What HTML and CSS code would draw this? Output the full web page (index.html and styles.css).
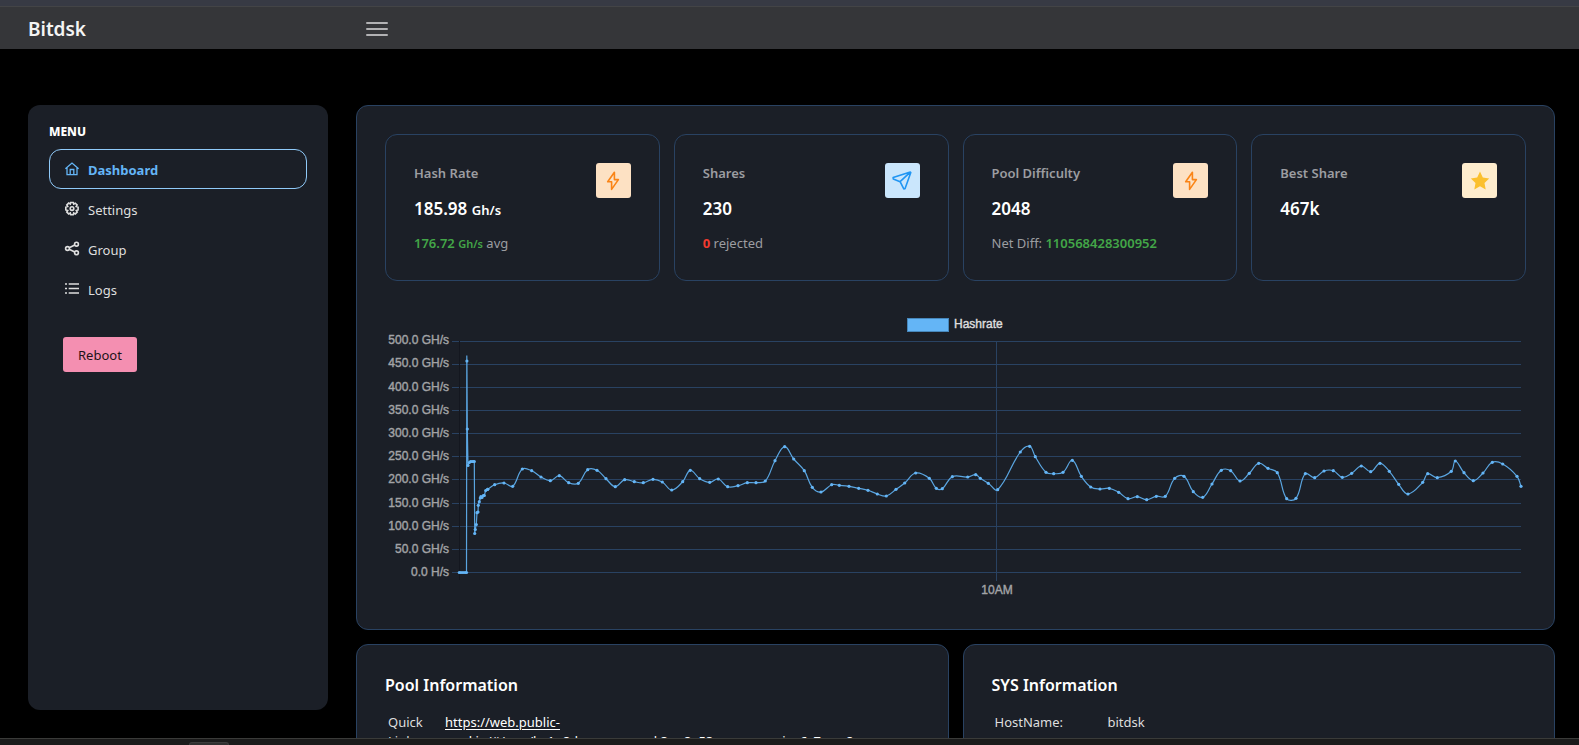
FILE: index.html
```html
<!DOCTYPE html>
<html lang="en">
<head>
<meta charset="utf-8">
<title>Bitdsk</title>
<link rel="stylesheet" href="styles.css">
</head>
<body>
<div class="window-strip"></div>
<header class="topbar">
  <h1 class="brand">Bitdsk</h1>
  <button class="menu-toggle" type="button" aria-label="Toggle menu"><span></span><span></span><span></span></button>
</header>
<div class="layout">
  <nav class="sidebar" aria-label="Menu">
    <h2 class="menu-title">MENU</h2>
    <ul class="menu">
      <li><a class="menu-link active" href="#dashboard">
        <svg class="icon" viewBox="0 0 14 14"><path d="M.4 5.8 7 0l6.6 5.8M2 4.6v7.1h10V4.6M5.2 11.7V6.5h3.6v5.2"/></svg>Dashboard</a></li>
      <li><a class="menu-link" href="#settings">
        <svg class="icon heavy" viewBox="0 1 14 14"><path d="M5.7.5h2.6l.4 1.6 1.5-.9 1.9 1.8-.9 1.5 1.9.6v2.8l-1.8.5.9 1.6-1.9 1.9-1.6-.9-.5 1.8H5.8l-.5-1.8-1.6.9-1.9-1.9.9-1.6L.8 7.9V5.1l1.9-.5L1.8 3l1.9-1.9 1.6.9z"/><circle cx="7" cy="6.6" r="1.8"/></svg>Settings</a></li>
      <li><a class="menu-link" href="#group">
        <svg class="icon heavy" viewBox="0 1 14 14"><circle cx="2.5" cy="6.5" r="1.9"/><circle cx="11.5" cy="2.2" r="1.9"/><circle cx="11.5" cy="10.8" r="1.9"/><path d="m4.2 5.7 5.6-2.7M4.2 7.3 9.8 10"/></svg>Group</a></li>
      <li><a class="menu-link" href="#logs">
        <svg class="icon heavy" viewBox="0 1 14 14"><path d="M0 2h2M3.7 2H14M0 6.5h2M3.7 6.5H14M0 11h2M3.7 11H14"/></svg>Logs</a></li>
    </ul>
    <button class="reboot" type="button">Reboot</button>
  </nav>
  <main class="content">
    <section class="card overview">
      <div class="stats">
        <article class="card stat">
          <div class="stat-head">
            <div><h3 class="stat-label">Hash Rate</h3><p class="stat-value">185.98 <small>Gh/s</small></p></div>
            <span class="badge orange"><svg viewBox="0 0 20 20"><path d="M11.4 1.2 4.7 10.8h3.9v7.6L15.4 8.6h-4z"/></svg></span>
          </div>
          <p class="stat-foot"><b class="good">176.72 <small>Gh/s</small></b> avg</p>
        </article>
        <article class="card stat">
          <div class="stat-head">
            <div><h3 class="stat-label">Shares</h3><p class="stat-value">230</p></div>
            <span class="badge blue"><svg viewBox="0 0 20 20"><path d="M18.3 1 1.1 6.6l.2 1.3 6.8 2.8 3.7 7.2 1.2-.1L18.8 1.5zM8.1 10.7 18.3 1.2"/></svg></span>
          </div>
          <p class="stat-foot"><b class="bad">0</b> rejected</p>
        </article>
        <article class="card stat">
          <div class="stat-head">
            <div><h3 class="stat-label">Pool Difficulty</h3><p class="stat-value">2048</p></div>
            <span class="badge orange"><svg viewBox="0 0 20 20"><path d="M11.4 1.2 4.7 10.8h3.9v7.6L15.4 8.6h-4z"/></svg></span>
          </div>
          <p class="stat-foot">Net Diff: <b class="good">110568428300952</b></p>
        </article>
        <article class="card stat">
          <div class="stat-head">
            <div><h3 class="stat-label">Best Share</h3><p class="stat-value">467k</p></div>
            <span class="badge yellow"><svg viewBox="0 0 20 20"><path d="m10 .6 2.8 5.9 6.4.9-4.7 4.5 1.2 6.5-5.7-3.1-5.7 3.1 1.2-6.5L.8 7.4l6.4-.9z"/></svg></span>
          </div>
        </article>
      </div>
      <svg class="chart" viewBox="385 309 1141 292" role="img" aria-label="Hashrate"></svg>
    </section>
    <section class="card info">
      <h2 class="info-title">Pool Information</h2>
      <table class="info-table pool">
        <tr><th scope="row">Quick Link:</th><td><a href="#pool">https://web.public-<br>pool.io/#/app/bc1q8dxxxxxxxxxxxk3rw8e53ncexxxxmnjnc6z7mxc8</a></td></tr>
      </table>
    </section>
    <section class="card info">
      <h2 class="info-title">SYS Information</h2>
      <table class="info-table sys">
        <tr><th scope="row">HostName:</th><td>bitdsk</td></tr>
      </table>
    </section>
  </main>
</div>
<div class="taskbar"><span class="taskbar-tab"></span></div>
<script src="chart.js"></script>
</body>
</html>
```
FILE: styles.css
```css
* { box-sizing: border-box; margin: 0; padding: 0; }

body {
  height: 100vh;
  overflow: hidden;
  background: #000;
  color: #dedede;
  font: 13px/21px "Noto Sans", "Open Sans", sans-serif;
}

.window-strip { height: 6px; background: #373a44; }

.topbar {
  display: flex;
  align-items: center;
  height: 43px;
  padding: 2px 28px 0;
  border-top: 1px solid #434446;
  background: #353639;
}
.brand { width: 338px; color: #f4f4f4; font-size: 19px; font-weight: 600; }

.menu-toggle {
  display: grid;
  gap: 4px;
  width: 22px;
  border: 0;
  background: none;
}
.menu-toggle span { height: 2px; border-radius: 1px; background: #b2b2b4; }

.layout {
  display: grid;
  grid-template-columns: 300px 1fr;
  gap: 28px;
  align-items: start;
  height: calc(100vh - 49px);
  overflow: hidden;
  padding: 56px 24px 0 28px;
}

.sidebar {
  height: calc(100vh - 140px);
  padding: 16px 21px;
  border-radius: 12px;
  background: #1b1f27;
}
.menu-title { margin-bottom: 7px; color: #fff; font-size: 12px; font-weight: 800; }
.menu { list-style: none; }
.menu-link {
  display: flex;
  align-items: center;
  gap: 9px;
  height: 40px;
  padding: 2px 15px 0;
  border: 1px solid transparent;
  border-radius: 12px;
  color: #dedede;
  text-decoration: none;
}
.menu-link.active { border-color: #90caf9; color: #64b5f6; font-weight: 700; }
.icon { width: 14px; height: 14px; fill: none; stroke: currentColor; stroke-width: 1.3; overflow: visible; }
.icon.heavy { stroke-width: 1.6; }

.reboot {
  height: 35px;
  margin: 28px 14px;
  padding: 1px 15px 0;
  border: 0;
  border-radius: 3px;
  background: #f48fb1;
  color: #1e1318;
  font: inherit;
}

.content { display: grid; grid-template-columns: 1fr 1fr; gap: 14px; }
.card { padding: 28px; border: 1px solid #294262; border-radius: 12px; background: #1b1f27; }
.overview { grid-column: 1 / -1; }

.stats { display: grid; grid-template-columns: repeat(4, 1fr); gap: 14px; margin-bottom: 28px; }
.stat { height: 147px; }
.stat-head { display: flex; justify-content: space-between; margin-bottom: 14px; }
.stat-label { margin-bottom: 14px; color: #9c9da1; font-size: 13px; font-weight: 600; }
.stat-value { color: #fff; font-size: 17px; font-weight: 600; }
.stat-value small { font-size: 13px; line-height: 1; }
.stat-foot { color: #9c9da1; line-height: 20px; }
.stat-foot b { font-weight: 600; }
.stat-foot small { font-size: 11px; line-height: 1; }
.good { color: #43a648; }
.stat-foot .bad { color: #f23a2f; font-weight: 700; }

.badge { display: grid; place-items: center; width: 35px; height: 35px; border-radius: 3px; }
.badge svg { width: 20px; height: 20px; fill: none; stroke: currentColor; stroke-width: 1.6; stroke-linejoin: round; }
.orange { background: #fde1c3; color: #fa8416; }
.blue { background: #cae6fc; color: #2196f3; }
.yellow { background: #feeccd; color: #fbc02d; }
.badge.yellow svg { fill: currentColor; stroke: none; }

.chart { display: block; width: 100%; font: 12px "Liberation Sans", Arial, sans-serif; }
.grid { stroke: #294262; }
.axis { stroke: #14171f; }
.tick { fill: #a2a3a6; stroke: #a2a3a6; stroke-width: 0.4; text-anchor: end; }
.tick.hour { text-anchor: middle; }
.legend { fill: #dedede; stroke: #dedede; stroke-width: 0.4; }
.legend-box { fill: #64b5f6; stroke: #4787bb; stroke-width: 1; }
.line { fill: none; stroke: #5aa5e0; stroke-width: 1.2; }
.dot { fill: #64b5f6; }

.info { height: 240px; }
.info-title { margin-bottom: 16px; color: #fff; font-size: 16px; font-weight: 600; line-height: 24px; }
.info-table { border-spacing: 0; line-height: 19px; }
.info-table th, .info-table td { padding: 0 3px; text-align: left; vertical-align: top; font-weight: 400; }
.pool th { width: 57px; }
.sys th { width: 113px; }
.info a { color: #fff; text-underline-offset: 2px; }

.taskbar {
  position: fixed;
  inset: auto 0 0;
  height: 7px;
  padding: 3px 0 0 189px;
  border-top: 1px solid #3a3b39;
  background: #1b1b1b;
}
.taskbar-tab { display: block; width: 40px; height: 3px; border: 1px solid #3c3c3c; border-bottom: 0; border-radius: 3px 3px 0 0; background: #303030; }
```
FILE: chart.js
```js
const NS = "http://www.w3.org/2000/svg";
const chart = document.querySelector(".chart");

function add(tag, attrs, text) {
  const el = document.createElementNS(NS, tag);
  for (const key in attrs) el.setAttribute(key, attrs[key]);
  if (text) el.textContent = text;
  chart.append(el);
}

// Legend
add("rect", { class: "legend-box", x: 907.5, y: 318.5, width: 41, height: 13 });
add("text", { class: "legend", x: 954, y: 328 }, "Hashrate");

// Horizontal grid, from 500 GH/s down to 0
const rows = [341.5, 364.5, 387.5, 410.5, 433.5, 456.5, 479.5, 503.5, 526.5, 549.5, 572.5];
rows.forEach((y, i) => {
  const value = 500 - i * 50;
  add("line", { class: "grid", x1: 452, y1: y, x2: 1521, y2: y });
  add("text", { class: "tick", x: 449, y: Math.round(344.2 + i * 23.2) }, value.toFixed(1) + (value ? " GH/s" : " H/s"));
});

// Vertical grid
add("line", { class: "axis", x1: 459.5, y1: 341, x2: 459.5, y2: 580 });
add("line", { class: "grid", x1: 996.5, y1: 341, x2: 996.5, y2: 581 });
add("text", { class: "tick hour", x: 997, y: 594 }, "10AM");

const start = [
  [459.3,572.5],[461,572.5],[463,572.5],[465,572.5],[466.5,572.5],[466.9,361],[467.3,429],[468,465.5],
  [469.3,462.5],[470.5,461.5],[472,461.5],[473.3,461.5],[474.3,461.5],[474.7,533.5],[475.3,529.5],[476.3,524.5],
  [477,512.7],[478,512],[478.3,505.3],[479.3,501.7],[480.3,498],[480.9,496.7],[482,497.5],[483.3,495.5],
  [484.3,495.5],[485.7,490.5],[487.7,489.3]
];
const rest = [
  [487.7,489.3],[494.7,484.7],[504,483],[512.7,486.3],[522.3,469],[531.7,470.7],[541,477],[550.3,480.7],
  [559.3,475.7],[568.7,482.7],[578.3,483.3],[587.7,469.7],[597,470.3],[606,478.7],[615.3,486.7],[624.7,479.7],
  [634.3,481.7],[643.3,482.7],[653,479.3],[662.3,482],[671.7,490],[682.7,481.7],[690.3,470.3],[699.7,478.7],
  [709.7,482.3],[718.3,479],[727.7,486.7],[738,485.7],[747.3,482.7],[756,482.7],[765.3,481],[775,460.7],
  [784.7,446.7],[793.7,459],[804.3,470.7],[812.3,487.3],[821,492],[831.7,484.7],[839.3,485.3],[849,486.3],
  [858.7,488.3],[868,490.3],[877.3,494],[886.3,496],[896,489.3],[904.7,483],[915.7,473],[929.3,478.3],
  [936.3,488.3],[942.3,488.7],[952.3,476.7],[967.7,477],[975.7,474.7],[980.3,478.3],[988.3,483.3],[997.7,489.7],
  [1020.3,452],[1029.7,446.3],[1035.3,456.7],[1046,472.3],[1053.7,473.7],[1063,472.3],[1072.3,460.3],[1081.3,476.3],
  [1090.7,487],[1100,489],[1109.3,488.3],[1118.7,492.3],[1128,498.7],[1137.3,496.7],[1146.7,499.7],[1156.3,496.3],
  [1165.3,496.3],[1174.7,478.3],[1184,476.3],[1193.3,491.7],[1202.7,497.3],[1212,484],[1221.3,470.3],[1230.7,470.7],
  [1240,481],[1249.3,473.3],[1258.7,463.3],[1268,468.3],[1277.3,472.7],[1286.7,498.7],[1296,498.3],[1305.3,473.7],
  [1314.7,477.7],[1324,471],[1333.3,470.7],[1342.3,477.3],[1351.7,473.3],[1361.3,466],[1370.7,471.7],[1380,463.3],
  [1389.3,471.3],[1398.7,484.3],[1408,494],[1422.7,482.3],[1427.7,473.7],[1437.3,477.7],[1451.3,471.3],[1455.3,461],
  [1464,472.7],[1473.3,480.7],[1483,473],[1492.3,462.3],[1502.7,464],[1517,476.3],[1521,486.3]
];

// Smooth curve: control points follow the slope between each point's neighbours
function handles(prev, cur, next) {
  const a = Math.hypot(cur[0] - prev[0], cur[1] - prev[1]);
  const b = Math.hypot(next[0] - cur[0], next[1] - cur[1]);
  const fa = 0.4 * a / (a + b || 1), fb = 0.4 * b / (a + b || 1);
  const dx = next[0] - prev[0], dy = next[1] - prev[1];
  return [[cur[0] - fa * dx, cur[1] - fa * dy], [cur[0] + fb * dx, cur[1] + fb * dy]];
}
const ctl = rest.map((p, i) => handles(rest[i - 1] || p, p, rest[i + 1] || p));
let curve = "M" + rest[0];
for (let i = 1; i < rest.length; i++) curve += "C" + [ctl[i - 1][1], ctl[i][0], rest[i]].join(" ");

const startPath = start.map(p => p[0] === 466.9 ? "466.8,355.5 L466.9,361" : p.join(","));
add("path", { class: "line", d: "M" + startPath.join(" L") });
add("path", { class: "line", d: curve });
[...start, ...rest].forEach(p => add("circle", { class: "dot", cx: p[0], cy: p[1], r: 1.6 }));
```
